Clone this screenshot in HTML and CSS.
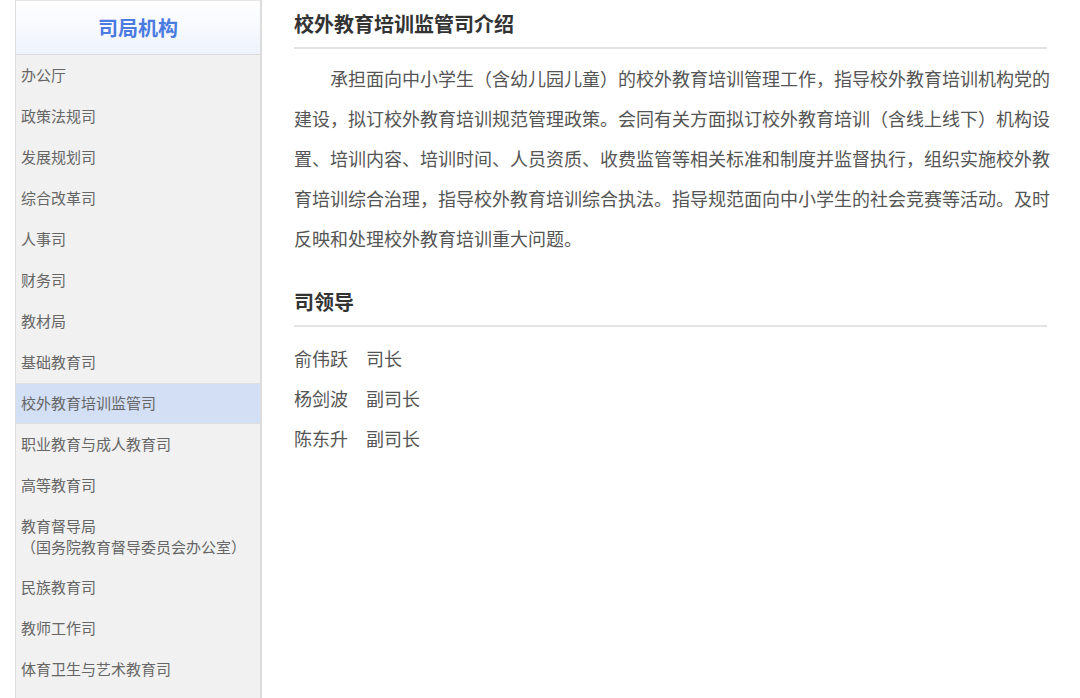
FILE: index.html
```html
<!DOCTYPE html>
<html>
<head>
  <meta charset="utf-8">
  <link rel="stylesheet" href="styles.css">
</head>
<body>

<div class="page">
  <div class="sidebar">
    <h2 class="side-title">司局机构</h2>
    <ul class="side-menu">
      <li>办公厅</li>
      <li>政策法规司</li>
      <li>发展规划司</li>
      <li>综合改革司</li>
      <li>人事司</li>
      <li>财务司</li>
      <li>教材局</li>
      <li>基础教育司</li>
      <li class="active">校外教育培训监管司</li>
      <li>职业教育与成人教育司</li>
      <li>高等教育司</li>
      <li class="two-line">教育督导局<br>（国务院教育督导委员会办公室）</li>
      <li>民族教育司</li>
      <li>教师工作司</li>
      <li>体育卫生与艺术教育司</li>
    </ul>
  </div>

  <div class="main">
    <h3 class="section-title">校外教育培训监管司介绍</h3>
    <p class="intro">承担面向中小学生（含幼儿园儿童）的校外教育培训管理工作，指导校外教育培训机构党的建设，拟订校外教育培训规范管理政策。会同有关方面拟订校外教育培训（含线上线下）机构设置、培训内容、培训时间、人员资质、收费监管等相关标准和制度并监督执行，组织实施校外教育培训综合治理，指导校外教育培训综合执法。指导规范面向中小学生的社会竞赛等活动。及时反映和处理校外教育培训重大问题。</p>

    <h3 class="section-title second">司领导</h3>
    <ul class="leaders">
      <li>俞伟跃　司长</li>
      <li>杨剑波　副司长</li>
      <li>陈东升　副司长</li>
    </ul>
  </div>
</div>

</body>
</html>
```

FILE: styles.css
```css
body {
  margin: 0;
  padding: 0;
  background-color: #fff;
  font-family: "Noto Sans CJK SC", "Noto Sans", sans-serif;
}

.page {
  display: flex;
  height: 100vh;
  overflow: hidden;
}

.sidebar {
  width: 244px;
  margin-left: 15px;
  background-color: #f1f1f1;
  border-left: 1px solid #dcdcdc;
  border-right: 2px solid #dcdcdc;
  flex-shrink: 0;
}

.side-title {
  margin: 0;
  height: 53px;
  line-height: 54px;
  text-align: center;
  font-size: 20px;
  font-weight: bold;
  color: #4a7be0;
  background: linear-gradient(#ffffff, #eef3fd);
  border-top: 1px solid #e6e6e6;
  border-bottom: 1px solid #dcdcdc;
  box-sizing: content-box;
}

.side-menu {
  list-style: none;
  margin: 0;
  padding: 0;
}

.side-menu li {
  padding: 9px 5px 10px;
  line-height: 22px;
  font-size: 15px;
  color: #666;
}

.side-menu li.two-line {
  line-height: 21px;
}

.side-menu li.active {
  background-color: #d3dff5;
  border-top: 1px solid #dfdfdf;
  border-bottom: 1px solid #dfdfdf;
  padding-top: 8px;
  padding-bottom: 9px;
}

.main {
  width: 756px;
  margin-left: 32px;
}

.section-title {
  margin: 10px 3px 0 0;
  padding-bottom: 9px;
  line-height: 28px;
  font-size: 20px;
  font-weight: bold;
  color: #333;
  border-bottom: 2px solid #e3e3e3;
}

.section-title.second {
  margin-top: 30px;
}

.intro {
  margin: 9px 0 0;
  text-indent: 2em;
  font-size: 18px;
  line-height: 40px;
  color: #555;
}

.leaders {
  list-style: none;
  margin: 11px 0 0;
  padding: 0;
}

.leaders li {
  font-size: 18px;
  line-height: 40px;
  color: #555;
}
```
